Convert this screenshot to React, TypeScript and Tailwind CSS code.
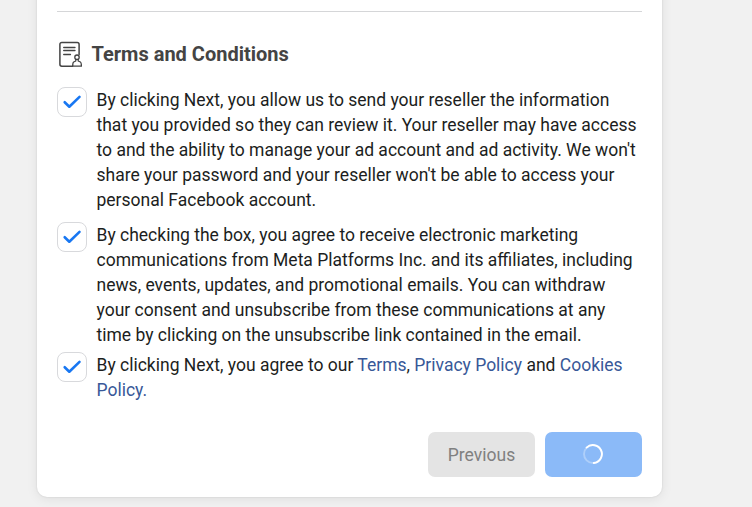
import React, { useState } from 'react';

interface ConsentRowProps {
    checked: boolean;
    onToggle: () => void;
    className?: string;
    children: React.ReactNode;
}

const ConsentRow: React.FC<ConsentRowProps> = ({ checked, onToggle, className = '', children }) => (
    <div className={`flex items-start gap-[9.5px] ${className}`}>
        <button
            type="button"
            role="checkbox"
            aria-checked={checked}
            aria-label="Agree"
            onClick={onToggle}
            className="flex h-[30px] w-[30px] shrink-0 items-center justify-center rounded-[8px] border border-[#d8d9dc] bg-white"
        >
            {checked && (
                <svg width="20" height="20" viewBox="0 0 20 20" fill="none" stroke="#1877f2" strokeWidth="2.6" strokeLinecap="round" strokeLinejoin="round">
                    <path d="M2.7 10.2l4.6 4.5L17.5 4.9" />
                </svg>
            )}
        </button>
        <p className="mt-px -mb-px flex-1 text-[17.5px] leading-[25px] text-[#1c1e21]">{children}</p>
    </div>
);

const TermsIcon: React.FC = () => (
    <svg width="25" height="26" viewBox="0 0 25 26" fill="none" stroke="#444444" strokeWidth="1.5" strokeLinecap="round" strokeLinejoin="round">
        <path d="M15.5 25.2H4.8A1.9 1.9 0 0 1 2.9 23.3V3.4A1.9 1.9 0 0 1 4.8 1.5H20.2A1.9 1.9 0 0 1 22.1 3.4V13.5" />
        <path d="M6.7 6.5H18M6.7 9.5H18M6.7 13.5H13.5" strokeWidth="1.3" />
        <circle cx="20" cy="16.2" r="2.2" strokeWidth="1.3" />
        <path d="M18.8 18.3V20L16.7 21Q15.7 21.6 15.7 25.2H24.4Q24.4 21.6 23.4 21L21.2 20V18.3" strokeWidth="1.3" />
    </svg>
);

const App: React.FC = () => {
    const [accepted, setAccepted] = useState([true, true, true]);

    const toggle = (index: number) => {
        setAccepted((prev) => prev.map((value, i) => (i === index ? !value : value)));
    };

    return (
        <div className="h-[507px] overflow-hidden bg-[#f1f1f1] pl-[37px] font-['Roboto','Liberation_Sans',sans-serif]">
            <div className="-mt-5 h-[517px] w-[625px] rounded-b-[10px] bg-white px-5 pt-[31px] shadow-[0_0_2px_rgba(0,0,0,0.12),0_2px_12px_rgba(0,0,0,0.08)]">
                <hr className="border-t border-[#d5d6d8]" />

                <div className="mt-[29px] flex h-[26px] items-center gap-[9.5px]">
                    <TermsIcon />
                    <h2 className="text-[20px] leading-[26px] font-bold text-[#444444]">Terms and Conditions</h2>
                </div>

                <ConsentRow checked={accepted[0]} onToggle={() => toggle(0)} className="mt-[20px]">
                    By clicking Next, you allow us to send your reseller the information that you provided so they can
                    review it. Your reseller may have access to and the ability to manage your ad account and ad
                    activity. We won't share your password and your reseller won't be able to access your personal
                    Facebook account.
                </ConsentRow>
                <ConsentRow checked={accepted[1]} onToggle={() => toggle(1)} className="mt-[10px]">
                    By checking the box, you agree to receive electronic marketing communications from Meta Platforms
                    Inc. and its affiliates, including news, events, updates, and promotional emails. You can withdraw
                    your consent and unsubscribe from these communications at any time by clicking on the unsubscribe
                    link contained in the email.
                </ConsentRow>
                <ConsentRow checked={accepted[2]} onToggle={() => toggle(2)} className="mt-[5px]">
                    By clicking Next, you agree to our <a href="#" className="text-[#385898]">Terms</a>,{' '}
                    <a href="#" className="text-[#385898]">Privacy Policy</a> and{' '}
                    <a href="#" className="text-[#385898]">Cookies Policy.</a>
                </ConsentRow>

                <div className="mt-[30px] flex justify-end gap-[10px]">
                    <button type="button" className="h-[45px] w-[107px] rounded-[7px] bg-[#e4e4e4] pt-0.5 text-[17.5px] text-[#808080]">
                        Previous
                    </button>
                    <button type="button" aria-label="Next" className="flex h-[45px] w-[97px] items-center justify-center rounded-[7px] bg-[#8bbaf8] pr-px pb-px">
                        <svg width="20" height="20" viewBox="0 0 20 20" fill="none" strokeWidth="1.9">
                            <circle cx="10" cy="10" r="9" stroke="#ffffff" strokeOpacity="0.3" />
                            <path d="M3.6 3.6A9 9 0 1 1 10.8 19" stroke="#ffffff" strokeLinecap="round" />
                        </svg>
                    </button>
                </div>
            </div>
        </div>
    );
};

export default App;
